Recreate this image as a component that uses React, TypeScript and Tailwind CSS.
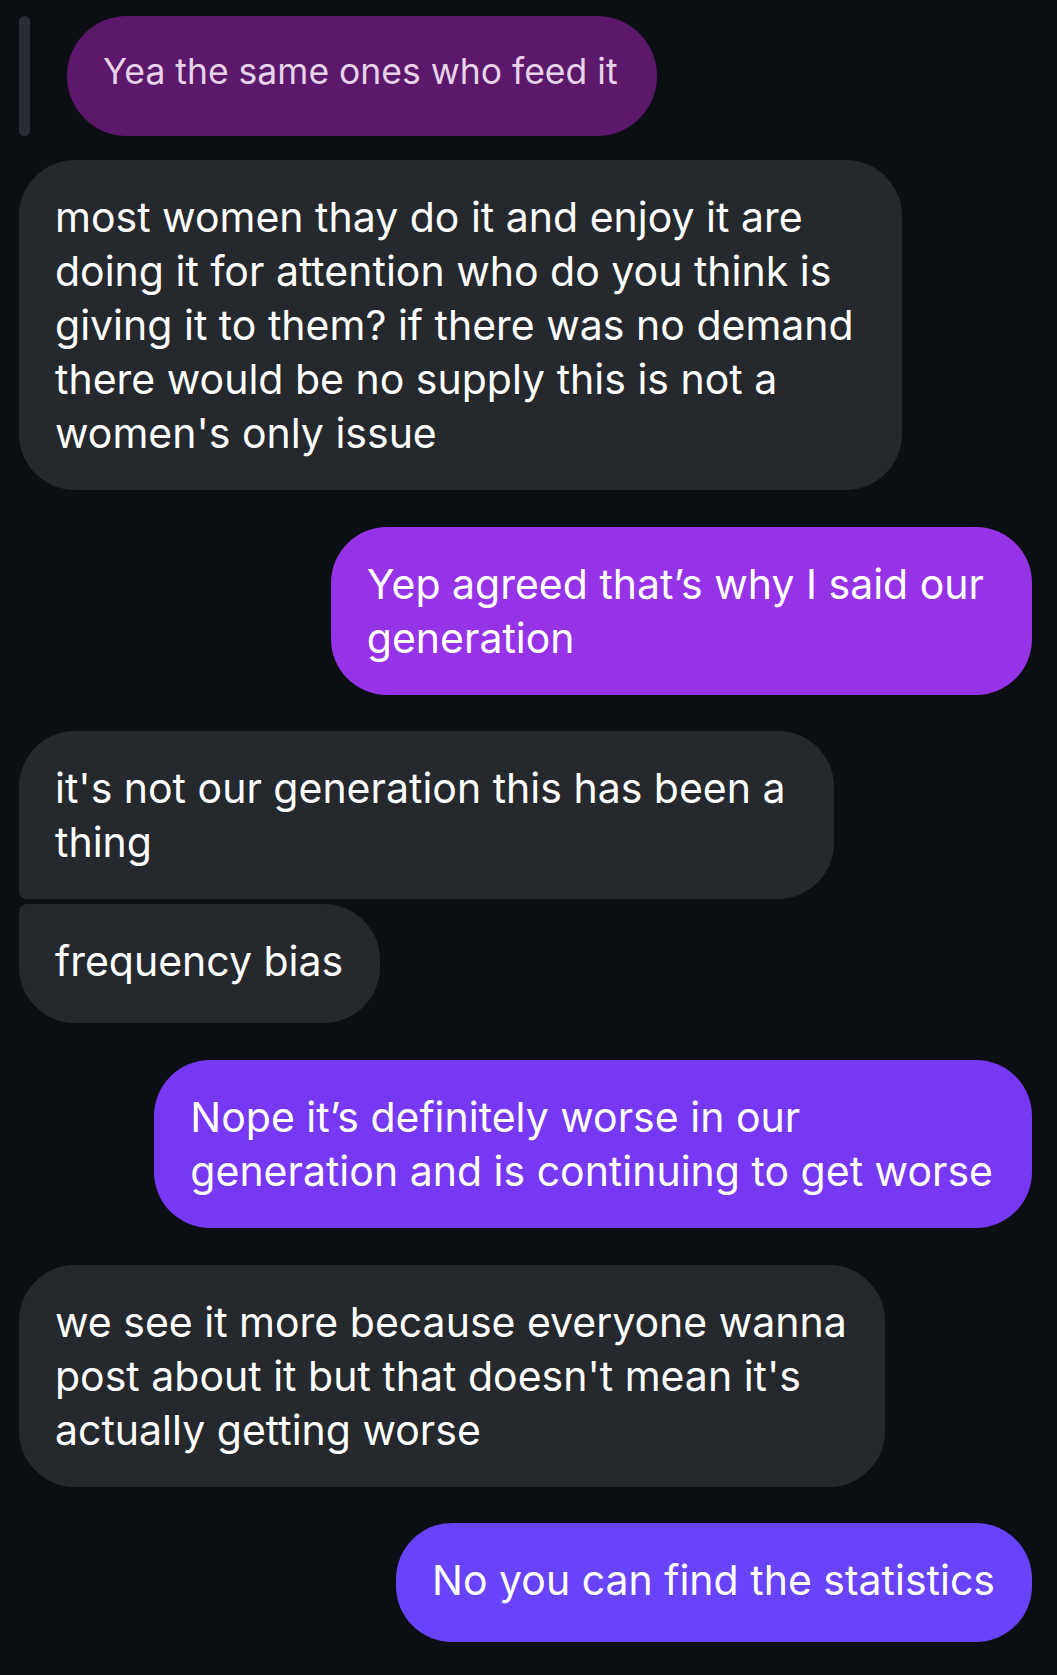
import clsx from 'clsx'

type Msg = {
  id: number
  mine: boolean
  lines: string[]
  bg: string
  gap: string
  pad: string
  corner?: string
}

const MESSAGES: Msg[] = [
  {
    id: 1,
    mine: false,
    lines: [
      'most women thay do it and enjoy it are',
      'doing it for attention who do you think is',
      'giving it to them? if there was no demand',
      'there would be no supply this is not a',
      "women's only issue",
    ],
    bg: 'bg-[#25282d]',
    gap: 'mt-[24px]',
    pad: 'pr-[48px]',
  },
  {
    id: 2,
    mine: true,
    lines: ['Yep agreed that\u2019s why I said our', 'generation'],
    bg: 'bg-[#9633e7]',
    gap: 'mt-[37px]',
    pad: 'pr-[48px]',
  },
  {
    id: 3,
    mine: false,
    lines: ["it's not our generation this has been a", 'thing'],
    bg: 'bg-[#25282d]',
    gap: 'mt-[36px]',
    pad: 'pr-[48px]',
    corner: 'rounded-bl-[8px]',
  },
  {
    id: 4,
    mine: false,
    lines: ['frequency bias'],
    bg: 'bg-[#25282d]',
    gap: 'mt-[5px]',
    pad: 'pr-[37px]',
    corner: 'rounded-tl-[8px]',
  },
  {
    id: 5,
    mine: true,
    lines: ['Nope it\u2019s definitely worse in our', 'generation and is continuing to get worse'],
    bg: 'bg-[#7738f4]',
    gap: 'mt-[37px]',
    pad: 'pr-[39px]',
  },
  {
    id: 6,
    mine: false,
    lines: [
      'we see it more because everyone wanna',
      "post about it but that doesn't mean it's",
      'actually getting worse',
    ],
    bg: 'bg-[#25282d]',
    gap: 'mt-[37px]',
    pad: 'pr-[38px]',
  },
  {
    id: 7,
    mine: true,
    lines: ['No you can find the statistics'],
    bg: 'bg-[#6843f9]',
    gap: 'mt-[36px]',
    pad: 'pr-[37px]',
  },
]

function Bubble({ msg }: { msg: Msg }) {
  return (
    <div className={clsx('flex', msg.mine ? 'justify-end' : 'justify-start', msg.gap)}>
      <div
        className={clsx(
          'w-fit min-h-[119px] rounded-[56px] pt-[30px] pb-[30px] pl-[36px] text-[41px] leading-[54px] text-white whitespace-nowrap',
          msg.pad,
          msg.bg,
          msg.corner,
        )}
      >
        {msg.lines.map((l, i) => (
          <div key={i}>{l}</div>
        ))}
      </div>
    </div>
  )
}

export default function App() {
  return (
    <div className="min-h-screen bg-[#0b0f14] pt-[16px] pb-[32px] pl-[19px] pr-[25px] font-[family-name:Inter,Liberation_Sans,sans-serif] antialiased">
      {/* Replied-to message */}
      <div className="flex items-stretch gap-[37px]">
        <div className="w-[11px] rounded-full bg-[#2a2d33]" />
        <div className="h-[120px] rounded-full bg-[#5c196b] pl-[36px] pr-[39px] pb-[8px] flex items-center text-[35.5px] text-[#e6d3ea] whitespace-nowrap">
          Yea the same ones who feed it
        </div>
      </div>

      {MESSAGES.map((m) => (
        <Bubble key={m.id} msg={m} />
      ))}
    </div>
  )
}
